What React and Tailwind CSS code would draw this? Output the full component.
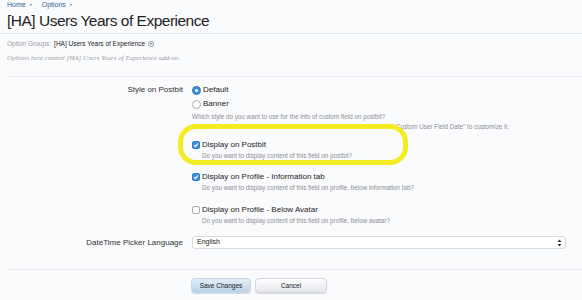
import React from 'react';

const Radio = ({ checked }) => (
  <span
    className={
      checked
        ? 'w-[9px] h-[9px] rounded-full bg-[#3b8ee0] border border-[#2f7bc8] flex items-center justify-center'
        : 'w-[9px] h-[9px] rounded-full bg-white border border-[#a9acb2]'
    }
  >
    {checked && <span className="w-[3px] h-[3px] rounded-full bg-white" />}
  </span>
);

const Check = ({ checked }) => (
  <span
    className={
      checked
        ? 'w-[8px] h-[8px] rounded-[2px] bg-[#3b8ee0] border border-[#2f7bc8] flex items-center justify-center'
        : 'w-[8px] h-[8px] rounded-[2px] bg-white border border-[#a9acb2]'
    }
  >
    {checked && (
      <svg width="6" height="6" viewBox="0 0 6 6">
        <path d="M1 3.2 L2.4 4.6 L5 1.4" stroke="white" strokeWidth="1.1" fill="none" />
      </svg>
    )}
  </span>
);

const Option = ({ control, label }) => (
  <div className="h-[12px] flex items-center gap-[2px] text-[8px] text-[#222]">
    {control}
    <span>{label}</span>
  </div>
);

const Hint = ({ children }) => (
  <div className="h-[10px] leading-[10px] text-[6.3px] text-[#8a8d92] pl-[10px] whitespace-nowrap">
    {children}
  </div>
);

export default function App() {
  return (
    <div
      className="w-[582px] h-[300px] overflow-hidden bg-[#fafbfd] relative"
      style={{ fontFamily: '"Liberation Sans", Arial, sans-serif' }}
    >
      {/* breadcrumb */}
      <div className="h-[10px] pl-[7px] flex items-center gap-[4px] text-[7px] text-[#2f5f9c]">
        <span>Home</span>
        <span className="text-[5px] text-[#8b9bb0]">▸</span>
        <span className="ml-[5px]">Options</span>
        <span className="text-[5px] text-[#8b9bb0]">▸</span>
      </div>

      {/* title */}
      <h1 className="h-[22px] pl-[7px] leading-[22px] text-[15.5px] text-[#222] tracking-[-0.5px]">
        [HA] Users Years of Experience
      </h1>

      <div className="h-px bg-[#e3e6ec] mt-[1px]" />

      <div className="h-[18px] pl-[7px] flex items-center gap-[3px] text-[6.5px] mt-[1px]">
        <span className="text-[#9a9da3]">Option Groups:</span>
        <span className="text-[#222]">[HA] Users Years of Experience</span>
        <span className="w-[6px] h-[6px] rounded-full border border-[#9a9da3] flex items-center justify-center text-[4px] text-[#777] leading-none">
          ▾
        </span>
      </div>

      <div
        className="h-[10px] pl-[7px] leading-[10px] text-[7px] italic text-[#9a9da3]"
        style={{ fontFamily: '"Liberation Serif", "DejaVu Serif", serif' }}
      >
        Options here control [HA] Users Years of Experience add-on.
      </div>

      <div className="h-px bg-[#eceef2] ml-[7px] mt-[13px]" />

      {/* style on postbit */}
      <div className="grid grid-cols-[183px_1fr] gap-x-[9px] mt-[7px]">
        <div className="h-[12px] leading-[12px] text-right text-[8px] text-[#333]">Style on Postbit</div>
        <div>
          <Option control={<Radio checked />} label="Default" />
          <div className="h-[2px]" />
          <Option control={<Radio />} label="Banner" />
          <div className="h-[2px]" />
          <div className="h-[10px] leading-[10px] text-[6.3px] text-[#8a8d92] whitespace-nowrap">
            Which style do you want to use for the info of custom field on postbit?
          </div>
          <div className="h-[10px] leading-[10px] text-[6.3px] text-[#8a8d92] whitespace-nowrap">
            If you choose Banner style, you can go to Style Properties and edit "[HA] Custom User Field Date" to customize it.
          </div>
        </div>
      </div>

      {/* checkboxes */}
      <div className="relative z-20 pl-[192px] mt-[7px]">
        <Option control={<Check checked />} label="Display on Postbit" />
        <Hint>Do you want to display content of this field on postbit?</Hint>
        <div className="h-[10px]" />
        <Option control={<Check checked />} label="Display on Profile - Information tab" />
        <Hint>Do you want to display content of this field on profile, below information tab?</Hint>
        <div className="h-[11px]" />
        <Option control={<Check />} label="Display on Profile - Below Avatar" />
        <Hint>Do you want to display content of this field on profile, below avatar?</Hint>
      </div>

      {/* datetime picker */}
      <div className="grid grid-cols-[183px_1fr] gap-x-[9px] mt-[10px] items-center">
        <div className="text-right text-[8px] text-[#333]">DateTime Picker Language</div>
        <div className="w-[374px] h-[13px] bg-white border border-[#d6d9de] rounded-[3px] flex items-center justify-between pl-[4px] pr-[3px] text-[7px] text-[#222]">
          <span>English</span>
          <svg width="5" height="8" viewBox="0 0 5 8">
            <path d="M0.5 3 L2.5 0.5 L4.5 3 Z M0.5 5 L2.5 7.5 L4.5 5 Z" fill="#333" />
          </svg>
        </div>
      </div>

      <div className="h-px bg-[#e6e8ec] ml-[7px] mt-[20px]" />

      {/* buttons */}
      <div className="flex gap-[4px] pl-[191px] mt-[8px]">
        <button className="w-[60px] h-[15px] rounded-[4px] bg-gradient-to-b from-[#e3eef7] to-[#b9d3e8] border border-[#c4d6e6] shadow-[0_1px_1px_rgba(0,0,0,0.15)] text-[6.5px] text-[#222]">
          Save Changes
        </button>
        <button className="w-[72px] h-[15px] rounded-[4px] bg-gradient-to-b from-[#ffffff] to-[#e4e6ec] border border-[#d2d5db] shadow-[0_1px_1px_rgba(0,0,0,0.15)] text-[6.5px] text-[#222]">
          Cancel
        </button>
      </div>

      {/* highlight annotation */}
      <div className="absolute z-10 left-[178px] top-[124px] w-[230px] h-[41px] rounded-[18px] border-[5px] border-[#f4ec22] bg-[#fafbfd]" />
    </div>
  );
}
